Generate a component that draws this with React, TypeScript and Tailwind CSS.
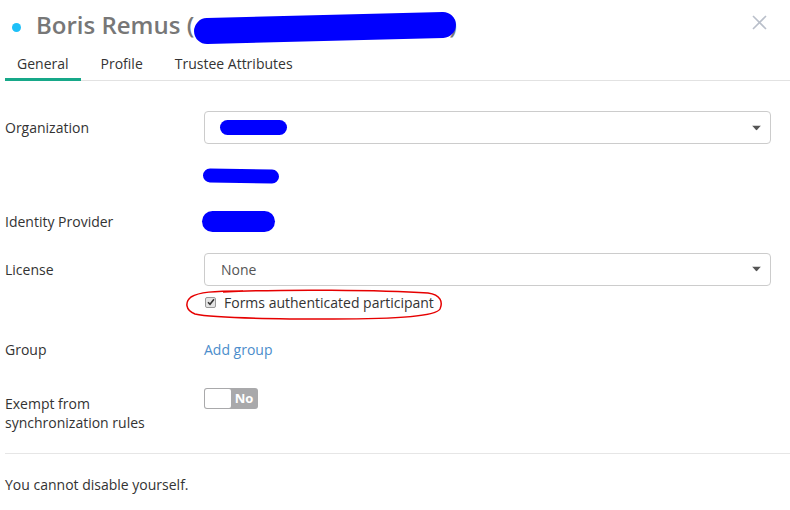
import React from "react";

const Label: React.FC<{ children: React.ReactNode }> = ({ children }) => (
  <div className="w-[199px] shrink-0 text-[14px] leading-[19px] text-[#333]">{children}</div>
);

const Scribble: React.FC<{ className: string }> = ({ className }) => (
  <div className={`rounded-full bg-[#0000ff] ${className}`} />
);

const Caret = () => (
  <svg width="9" height="5" viewBox="0 0 9 5" className="absolute right-[9px] top-1/2 -translate-y-1/2">
    <path d="M0 0h9L4.5 5z" fill="#555" />
  </svg>
);

const App: React.FC = () => {
  return (
    <div className="w-[790px] h-[510px] bg-white overflow-hidden font-['Open_Sans',sans-serif] text-[#333]">
      {/* Header */}
      <div className="relative flex items-center h-[50px] pl-[12px]">
        <span className="w-[9px] h-[9px] rounded-full bg-[#1ec0f8] mt-[4px]" />
        <h1 className="ml-[15px] text-[24px] font-semibold text-[#777] leading-none flex items-center">
          Boris Remus (
          <span className="relative inline-block w-[255px] h-[24px]">
            <Scribble className="absolute left-0 top-[2px] w-[262px] h-[26px] -rotate-[1.5deg]" />
          </span>
          )
        </h1>
        <svg width="15" height="15" viewBox="0 0 15 15" className="absolute left-[752px] top-[15px]">
          <path d="M1 1l13 13M14 1L1 14" stroke="#b9bfca" strokeWidth="1.6" />
        </svg>
      </div>

      {/* Tabs */}
      <div className="ml-[5px] flex gap-[8px] border-b border-[#e2e2e2] text-[14px] text-[#333]">
        <div className="px-[12px] pt-[3px] pb-[4px] border-b-[3px] border-[#17a889] -mb-px">General</div>
        <div className="px-[12px] pt-[3px] pb-[4px]">Profile</div>
        <div className="px-[12px] pt-[3px] pb-[4px]">Trustee Attributes</div>
      </div>

      {/* Body */}
      <div className="pl-[5px] pr-[19px]">
        <div className="mt-[30px] flex items-center h-[33px]">
          <Label>Organization</Label>
          <div className="relative flex-1 h-[33px] border border-[#ccc] rounded-[4px] flex items-center pl-[15px]">
            <Scribble className="w-[67px] h-[15px]" />
            <Caret />
          </div>
        </div>

        <div className="mt-[25px] flex h-[15px]">
          <div className="w-[198px] shrink-0" />
          <Scribble className="w-[76px] h-[14px] rotate-[1deg]" />
        </div>

        <div className="mt-[26px] flex items-center h-[22px]">
          <Label>Identity Provider</Label>
          <Scribble className="-ml-[2px] w-[73px] h-[21px] rounded-[10px]" />
        </div>

        <div className="mt-[21px] flex items-center h-[32px]">
          <Label>License</Label>
          <div className="relative flex-1 h-[33px] border border-[#ccc] rounded-[4px] flex items-center pl-[16px] text-[14px] text-[#555]">
            None
            <Caret />
          </div>
        </div>

        <div className="relative mt-[9px] flex items-center h-[16px]">
          <div className="w-[200px] shrink-0" />
          <span className="w-[11px] h-[11px] rounded-[2px] border border-[#999] bg-[#e4e4e4] flex items-center justify-center">
            <svg width="8" height="8" viewBox="0 0 8 8">
              <path d="M1 4.2l2 2L7 1.3" stroke="#333" strokeWidth="1.6" fill="none" />
            </svg>
          </span>
          <span className="ml-[8px] text-[14px] text-[#333]">Forms authenticated participant</span>
          <svg width="262" height="34" viewBox="0 0 262 34" className="absolute left-[178px] top-[-6px] pointer-events-none">
            <path
              d="M40 4 C100 1 200 2 245 5 C258 7 260 14 257 21 C253 28 220 31 150 31 C90 31 30 30 12 26 C2 22 2 14 8 9 C16 4 30 3 60 3"
              stroke="#e60000"
              strokeWidth="1.5"
              fill="none"
            />
          </svg>
        </div>

        <div className="mt-[29px] flex items-center h-[20px]">
          <Label>Group</Label>
          <span className="text-[14px] text-[#4c8dcb]">Add group</span>
        </div>

        <div className="mt-[29px] flex items-start">
          <div className="w-[199px] shrink-0 pt-[6px] text-[14px] leading-[19px] text-[#333]">
            Exempt from
            <br />
            synchronization rules
          </div>
          <div className="flex items-center w-[54px] h-[21px] rounded-[3px] bg-[#a9a9ab] p-[1px]">
            <span className="w-[26px] h-[19px] rounded-[2px] bg-white" />
            <span className="flex-1 text-center text-[13px] font-bold text-white">No</span>
          </div>
        </div>

        <div className="mt-[21px] border-t border-[#e6e6e6] -mr-[19px]" />

        <div className="mt-[21px] text-[14px] leading-[19px] text-[#333]">You cannot disable yourself.</div>
      </div>
    </div>
  );
};

export default App;
